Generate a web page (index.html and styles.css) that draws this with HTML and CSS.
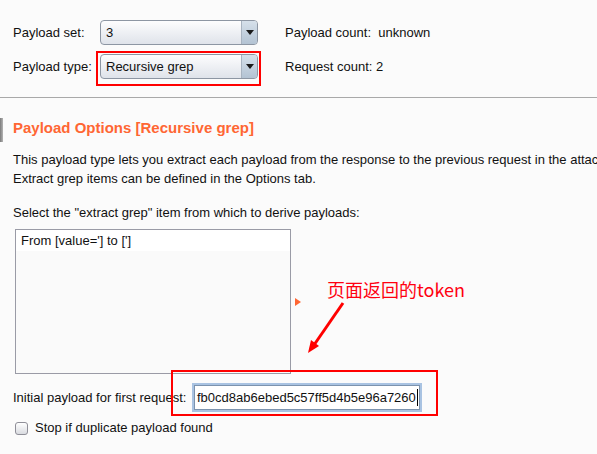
FILE: index.html
```html
<!DOCTYPE html>
<html>
<head>
<meta charset="utf-8">
<link rel="stylesheet" href="styles.css">
</head>
<body>
<div class="settings">
  <div class="label">Payload set:</div>
  <div class="combo"><span class="combo-text">3</span><span class="combo-btn"><span class="tri"></span></span></div>
  <div class="count">Payload count:&nbsp; unknown</div>
  <div class="label">Payload type:</div>
  <div class="combo">
    <span class="combo-text">Recursive grep</span><span class="combo-btn"><span class="tri"></span></span>
    <span class="hl hl-type"></span>
  </div>
  <div class="count">Request count: 2</div>
</div>

<div class="options">
  <span class="marker"></span>
  <h2 class="heading">Payload Options [Recursive grep]</h2>
  <p class="desc">This payload type lets you extract each payload from the response to the previous request in the attac<br>Extract grep items can be defined in the Options tab.</p>
  <p class="select-label">Select the "extract grep" item from which to derive payloads:</p>
  <div class="list-row">
    <div class="listbox">
      <div class="list-item">From [value='] to [']</div>
    </div>
    <span class="split-arrow"></span>
  </div>
  <div class="initial-row">
    <span class="initial-label">Initial payload for first request:</span>
    <div class="field">
      <span class="field-text">fb0cd8ab6ebed5c57ff5d4b5e96a7260</span><span class="caret"></span>
      <span class="hl hl-field"></span>
    </div>
  </div>
  <label class="check-row"><span class="checkbox"></span><span>Stop if duplicate payload found</span></label>

  <div class="note">页面返回的token</div>
  <svg class="note-arrow" width="50" height="56" viewBox="0 0 50 56">
    <line x1="42" y1="2" x2="13" y2="44" stroke="#ff0000" stroke-width="3"/>
    <polygon points="7,52 18,45 10,39" fill="#ff0000"/>
  </svg>
</div>
</body>
</html>
```

FILE: styles.css
```css
html, body {
  margin: 0;
  padding: 0;
}
body {
  background: #fbfbfb;
  font-family: "Liberation Sans", Arial, sans-serif;
  font-size: 13px;
  color: #111;
  width: 597px;
  height: 454px;
  overflow: hidden;
}
.settings {
  display: grid;
  grid-template-columns: 87px 158px auto;
  grid-auto-rows: 25px;
  row-gap: 9px;
  padding: 20px 0 18px 13px;
  border-bottom: 1px solid #a9a9a9;
  align-items: center;
}
.label { line-height: 16px; }
.count { padding-left: 27px; line-height: 16px; }
.combo {
  position: relative;
  height: 25px;
  box-sizing: border-box;
  border: 1px solid #8d96a3;
  border-radius: 4px;
  background: linear-gradient(#fdfdfe, #dfe3ea);
  display: flex;
  align-items: center;
}
.combo-text {
  flex: 1;
  padding-left: 5px;
  line-height: 16px;
}
.combo-btn {
  width: 15px;
  align-self: stretch;
  border-left: 1px solid #a8b3c0;
  border-radius: 0 3px 3px 0;
  background: linear-gradient(#d6e0ea, #b3c3d3);
  display: flex;
  align-items: center;
  justify-content: center;
}
.tri {
  width: 0;
  height: 0;
  border-left: 4px solid transparent;
  border-right: 4px solid transparent;
  border-top: 5px solid #1a1a1a;
}
.hl {
  position: absolute;
  border: 2px solid #ff0000;
  pointer-events: none;
}
.hl-type {
  left: -5px;
  right: -4px;
  top: -4px;
  bottom: -8px;
}
.options {
  position: relative;
  padding: 22px 0 18px 0;
  border-bottom: 1px solid #b5b5b5;
}
.marker {
  position: absolute;
  left: 0;
  top: 20px;
  width: 3px;
  height: 24px;
  background: linear-gradient(90deg, #7b7b7b, #b4b4b4);
}
.heading {
  margin: 0;
  padding-left: 13px;
  font-size: 15px;
  line-height: 16px;
  font-weight: bold;
  color: #ff6633;
}
.desc {
  margin: 14px 0 0 0;
  padding-left: 13px;
  line-height: 19px;
  white-space: nowrap;
  overflow: hidden;
}
.select-label {
  margin: 15px 0 0 0;
  padding-left: 13px;
  line-height: 19px;
}
.list-row {
  margin-top: 7px;
  padding-left: 15px;
  display: flex;
  align-items: center;
}
.listbox {
  width: 276px;
  height: 145px;
  box-sizing: border-box;
  border: 1px solid #9a9ba6;
  background: #fafafa;
}
.list-item {
  background: #ffffff;
  height: 21px;
  line-height: 21px;
  padding-left: 5px;
}
.split-arrow {
  margin-left: 4px;
  width: 0;
  height: 0;
  border-top: 4px solid transparent;
  border-bottom: 4px solid transparent;
  border-left: 6px solid #ff6633;
}
.initial-row {
  margin-top: 9px;
  padding-left: 13px;
  display: grid;
  grid-template-columns: 179px 230px;
  align-items: center;
}
.initial-label { line-height: 16px; }
.field {
  position: relative;
  height: 29px;
  box-sizing: border-box;
  border: 2px solid #a9c3e2;
  box-shadow: inset 0 0 0 1px #7c93ae;
  background: #fff;
  display: flex;
  align-items: center;
  padding-left: 3px;
}
.field-text { line-height: 16px; }
.caret {
  display: inline-block;
  width: 1px;
  height: 17px;
  margin-left: 1px;
  background: #000;
}
.hl-field {
  left: -23px;
  right: -18px;
  top: -15px;
  bottom: -6px;
}
.check-row {
  margin-top: 8px;
  padding-left: 15px;
  display: flex;
  align-items: center;
  gap: 7px;
  line-height: 16px;
}
.checkbox {
  width: 13px;
  height: 13px;
  box-sizing: border-box;
  border: 1px solid #8f8f98;
  border-radius: 3px;
  background: linear-gradient(#ffffff, #d9dbe0);
}
.note {
  position: absolute;
  left: 327px;
  top: 182px;
  font-family: "Noto Sans CJK SC", "Noto Sans", sans-serif;
  font-size: 18px;
  line-height: 18px;
  color: #ff0010;
}
.note-arrow {
  position: absolute;
  left: 301px;
  top: 203px;
}
```
